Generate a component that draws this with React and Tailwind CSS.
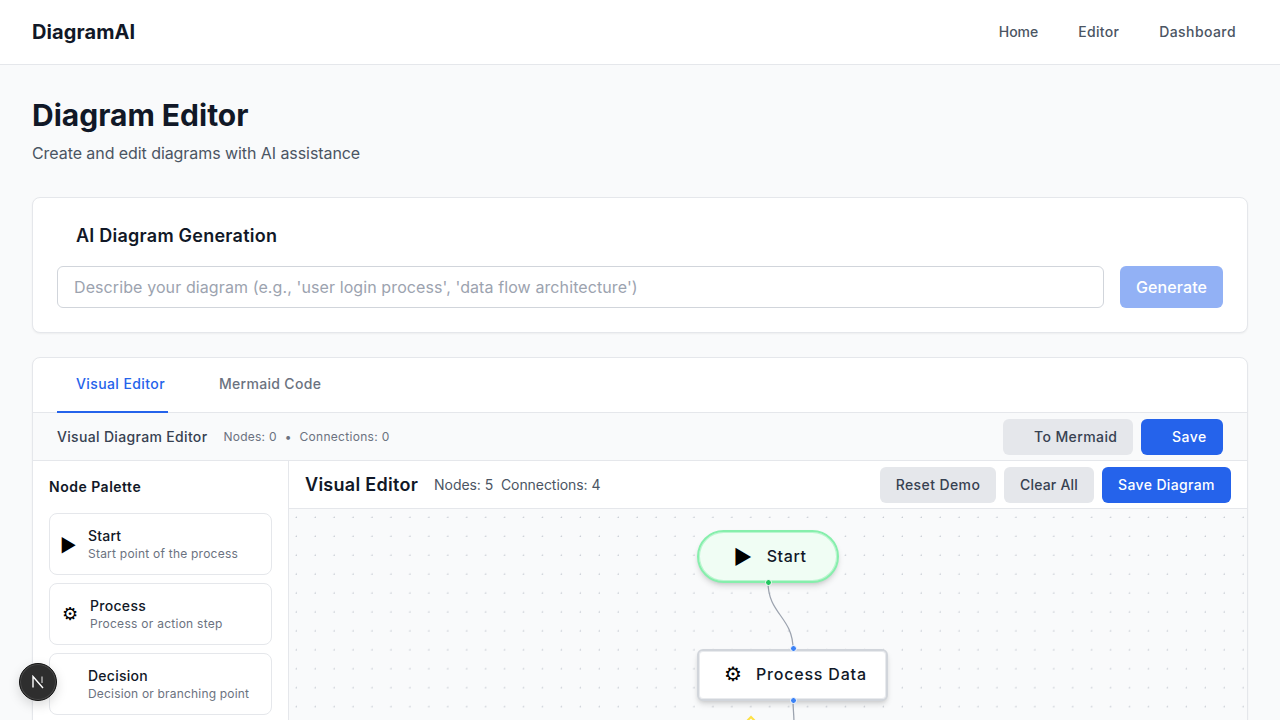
const paletteItems = [
  { name: "Start", nameClass: "tracking-[0.2px]", descClass: "tracking-[0.23px]", desc: "Start point of the process", icon: "▶", iconClass: "w-4 -ml-[2px] mt-[3px] text-[18px]" },
  { name: "Process", nameClass: "tracking-[0.3px]", descClass: "tracking-[0.27px]", desc: "Process or action step", icon: "⚙", iconClass: "w-4 text-[18px]" },
  { name: "Decision", nameClass: "tracking-[0.25px]", descClass: "tracking-[0.18px]", desc: "Decision or branching point", icon: "", iconClass: "w-[14px]" },
];

export default function App() {
  return (
    <div className="h-screen overflow-hidden bg-[#f9fafb] font-['Inter',sans-serif] text-[#111827]">
      <nav className="h-[65px] bg-white border-b border-[#e5e7eb] px-8 flex items-center justify-between">
        <span className="text-xl font-bold tracking-[0.1px]">DiagramAI</span>
        <div className="flex gap-4 text-sm font-medium text-[#4b5563]">
          <a className="px-3 py-2">Home</a>
          <a className="px-3 py-2 tracking-[0.3px]">Editor</a>
          <a className="px-3 py-2 tracking-[0.42px]">Dashboard</a>
        </div>
      </nav>

      <main className="p-8">
        <h1 className="text-3xl font-bold mb-2">Diagram Editor</h1>
        <p className="text-base text-[#4b5563] mb-8 tracking-[-0.07px]">Create and edit diagrams with AI assistance</p>

        <section className="bg-white border border-[#e5e7eb] rounded-lg shadow-xs p-6 mb-6">
          <h2 className="text-lg font-semibold ml-[19px] mb-4 tracking-[0.24px]">AI Diagram Generation</h2>
          <div className="flex gap-4">
            <input
              className="flex-1 h-[42px] px-4 border border-[#d1d5db] rounded-md text-base tracking-[0.1px] bg-white placeholder:text-[#9ca3af]"
              placeholder="Describe your diagram (e.g., 'user login process', 'data flow architecture')"
            />
            <button className="h-[42px] w-[103px] rounded-md bg-[#2563eb]/50 text-white text-base font-medium tracking-[0.1px]">Generate</button>
          </div>
        </section>

        <section className="bg-white border border-[#e5e7eb] rounded-lg shadow-xs">
          <div className="h-[55px] border-b border-[#e5e7eb] px-6 flex gap-[32px] text-sm font-medium">
            <button className="w-[111px] h-[55px] pl-[19px] pb-[1px] text-left text-[#2563eb] border-b-2 border-[#2563eb] tracking-[0.4px]">Visual Editor</button>
            <button className="h-[55px] ml-[19px] pb-[3px] text-[#6b7280] tracking-[0.31px]">Mermaid Code</button>
          </div>

          <div className="h-[48px] bg-[#f9fafb] border-b border-[#e5e7eb] pl-6 pr-6 flex items-center justify-between">
            <div className="flex items-center gap-4">
              <span className="text-sm font-medium text-[#374151] tracking-[0.33px]">Visual Diagram Editor</span>
              <span className="flex items-center gap-2 text-xs text-[#6b7280]">
                <span className="tracking-[0.25px]">Nodes: 0</span>
                <span>•</span>
                <span className="tracking-[0.3px]">Connections: 0</span>
              </span>
            </div>
            <div className="flex gap-2 text-sm font-medium">
              <button className="h-9 w-[130px] pl-[31px] text-left rounded-md bg-[#e5e7eb] text-[#374151] tracking-[0.4px]">To Mermaid</button>
              <button className="h-9 w-[82px] pl-[31px] text-left rounded-md bg-[#2563eb] text-white tracking-[0.45px]">Save</button>
            </div>
          </div>

          <div className="flex">
            <aside className="w-[256px] shrink-0 border-r border-[#e5e7eb] p-4">
              <h3 className="text-sm font-semibold mb-4 tracking-[0.5px]">Node Palette</h3>
              <div className="flex flex-col gap-2">
                {paletteItems.map((item) => (
                  <div key={item.name} className="h-[62px] bg-white border border-[#e5e7eb] rounded-lg px-3 flex items-center gap-3">
                    <span className={`${item.iconClass} leading-none text-black`}>{item.icon}</span>
                    <div>
                      <div className={`text-sm font-medium leading-5 ${item.nameClass}`}>{item.name}</div>
                      <div className={`text-xs leading-4 text-[#6b7280] ${item.descClass}`}>{item.desc}</div>
                    </div>
                  </div>
                ))}
              </div>
            </aside>

            <div className="flex-1 min-w-0">
              <div className="h-[48px] bg-white border-b border-[#e5e7eb] px-4 flex items-center justify-between">
                <div className="flex items-center gap-4">
                  <span className="text-lg font-semibold tracking-[0.28px]">Visual Editor</span>
                  <span className="text-sm text-[#4b5563] tracking-[-0.06px]">Nodes: 5&nbsp;&nbsp;Connections: 4</span>
                </div>
                <div className="flex gap-2 text-sm font-medium">
                  <button className="h-9 w-[116px] rounded-md bg-[#e5e7eb] text-[#374151] tracking-[0.4px]">Reset Demo</button>
                  <button className="h-9 w-[90px] rounded-md bg-[#e5e7eb] text-[#374151] tracking-[0.2px]">Clear All</button>
                  <button className="h-9 w-[129px] rounded-md bg-[#2563eb] text-white tracking-[0.36px]">Save Diagram</button>
                </div>
              </div>

              <div className="relative h-[600px] overflow-hidden bg-[#f9fafb] bg-[radial-gradient(circle_at_7.4px_8.4px,#c4c9d1_0.8px,transparent_1px)] bg-[size:18.95px_18.95px]">
                <svg className="absolute left-0 top-0" width="958" height="600" fill="none">
                  <path d="M479 73 C479 105 504 108 504 140" stroke="#9ca3af" strokeWidth="1.25" />
                  <path d="M504 192 C504 200 505 205 505 215" stroke="#9ca3af" strokeWidth="1.25" />
                </svg>

                <div className="absolute left-[408px] top-[21px] w-[142px] h-[53px] pb-[2px] rounded-full bg-[#f0fdf4] border-2 border-[#86efac] shadow-[inset_0_0_0_1px_rgba(134,239,172,0.5),0_4px_6px_-1px_rgba(0,0,0,0.14),0_2px_4px_-2px_rgba(0,0,0,0.12)] flex items-center justify-center gap-[14px] text-base font-medium tracking-[0.6px]">
                  <span className="text-xl leading-none text-black ml-[4px] mt-[2px]">▶</span>
                  <span>Start</span>
                </div>
                <span className="absolute left-[476px] top-[70px] size-[7px] rounded-full bg-[#22c55e] border border-white" />

                <div className="absolute left-[408px] top-[140px] w-[191px] h-[52px] pb-[2px] rounded-md bg-white border-2 border-[#d1d5db] shadow-[inset_0_0_0_1px_rgba(209,213,219,0.5),0_4px_6px_-1px_rgba(0,0,0,0.14),0_2px_4px_-2px_rgba(0,0,0,0.12)] flex items-center justify-center gap-[13px] text-base font-medium tracking-[0.8px]">
                  <span className="text-xl leading-none text-black ml-[6px]">⚙</span>
                  <span>Process Data</span>
                </div>
                <span className="absolute left-[501px] top-[136px] size-[7px] rounded-full bg-[#3b82f6] border border-white" />
                <span className="absolute left-[501px] top-[188px] size-[7px] rounded-full bg-[#3b82f6] border border-white" />

                <div className="absolute left-[432px] top-[219px] w-[60px] h-[60px] rotate-45 bg-[#fefce8] border-2 border-[#fde047]" />
              </div>
            </div>
          </div>
        </section>
      </main>

      <div className="fixed left-[19px] bottom-[19px] size-[38px] rounded-full bg-[#2e2e2e] border border-[#111] shadow-[inset_0_0_0_1px_#4a4a4a,0_4px_12px_rgba(0,0,0,0.15)] flex items-center justify-center">
        <svg width="14" height="14" viewBox="0 0 14 14" fill="none">
          <path d="M2 12.5V1.5L12 13" stroke="white" strokeWidth="1.4" />
          <path d="M11 1.5V8" stroke="#bbbbbb" strokeWidth="1.4" />
        </svg>
      </div>
    </div>
  );
}
